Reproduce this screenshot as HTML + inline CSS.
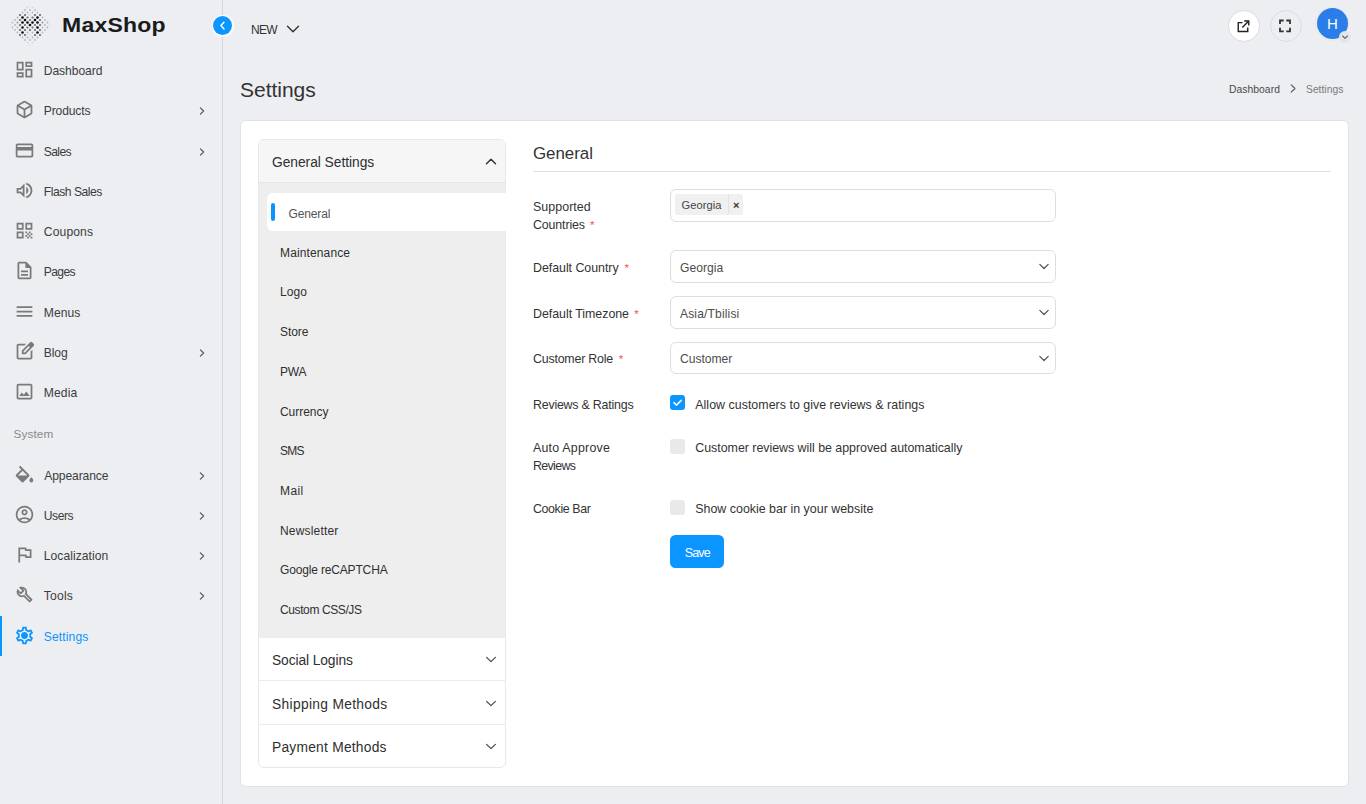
<!DOCTYPE html>
<html lang="en">
<head>
<meta charset="utf-8">
<title>Settings - MaxShop</title>
<style>
*{box-sizing:border-box;margin:0;padding:0}
html,body{width:1366px;height:804px;overflow:hidden}
body{background:#eceef2;font-family:"Liberation Sans",Arial,sans-serif;font-size:12px;color:#3a3a3a;position:relative}
.abs{position:absolute}
svg{display:block}
/* sidebar */
#sidebar{position:absolute;left:0;top:0;width:223px;height:804px;border-right:1px solid #d5d6db}
.logo{position:absolute;left:10px;top:5px}
.brand{position:absolute;left:62px;top:11px;font-weight:bold;font-size:20px;line-height:28px;color:#1b1b1b;transform-origin:0 50%;transform:scaleX(1.15);letter-spacing:0.2px;white-space:nowrap}
.nav{position:absolute;left:0;width:222px;height:40px}
.nav svg.ic{position:absolute;left:13.500px;top:8.300px}
.nav .t{position:absolute;left:43.800px;top:0;line-height:40px;font-size:12.100px;color:#3c3c3c;white-space:nowrap}
.nav svg.ar{position:absolute;left:198px;top:15.200px}
.nav.active .t{color:#0b95ff}
.nav.active:before{content:"";position:absolute;left:0;top:-1.200px;width:2px;height:40px;background:#0b95ff}
.sect{position:absolute;left:13.500px;font-size:11.800px;color:#8a8a8a;line-height:20px}
/* header */
#collapse{position:absolute;left:211.500px;top:14.600px;width:22px;height:22px;border-radius:50%;background:#fdfdfe}
#collapse svg{position:absolute;left:1.200px;top:1.200px;border-radius:50%;background:#0b95ff}
.hbtn{position:absolute;width:32px;height:32px;border-radius:50%;border:1px solid #dcdde0}
h1{position:absolute;left:240px;top:75.300px;font-weight:normal;font-size:21px;line-height:30px;color:#333}
.crumb{position:absolute;top:82.800px;font-size:10.3px;line-height:14px;white-space:nowrap}
/* card */
#card{position:absolute;left:240px;top:120px;width:1108.600px;height:666.500px;background:#fff;border:1px solid #e0e2e6;border-radius:6px}
#acc{position:absolute;left:258px;top:139px;width:248px;height:629px;border:1px solid #e8e8e8;border-radius:6px;background:#fff}
.acch{position:absolute;left:0;width:246px;font-size:13.8px;color:#2f2f2f;padding-left:13px;white-space:nowrap}
.acch svg{position:absolute;left:226.400px}
.sub{position:absolute;left:21px;font-size:12px;line-height:20px;color:#2f2f2f;white-space:nowrap}
/* form */
.lbl{position:absolute;left:533px;font-size:12.400px;line-height:18px;color:#333;white-space:nowrap}
.lbl i{font-style:normal;color:#f4524a;margin-left:1.500px;font-size:11.500px}
.fld{position:absolute;left:670.300px;width:385.600px;height:32.400px;border:1px solid #dedede;border-radius:6px;background:#fff}
.fld .v{position:absolute;left:8.700px;top:1.400px;line-height:30.400px;font-size:12.100px;color:#4d4d4d;white-space:nowrap}
.fld svg{position:absolute;left:366.500px;top:11px}
.cb{position:absolute;left:670px;width:15px;height:15px;border-radius:3px;background:#e9e9e9}
.cb.on{background:#0b95ff}
.cbt{position:absolute;left:695.300px;font-size:12.400px;line-height:18px;color:#333;white-space:nowrap}
#t_n0{letter-spacing:-0.075px;margin-left:0.00px}
#t_n1{letter-spacing:-0.157px;margin-left:0.00px}
#t_n2{letter-spacing:-0.625px;margin-left:0.00px}
#t_n3{letter-spacing:-0.470px;margin-left:0.00px}
#t_n4{letter-spacing:0.133px;margin-left:0.00px}
#t_n5{letter-spacing:-0.625px;margin-left:0.00px}
#t_n6{letter-spacing:0.050px;margin-left:0.00px}
#t_n7{letter-spacing:-0.133px;margin-left:0.00px}
#t_n8{letter-spacing:0.125px;margin-left:0.00px}
#t_n9{letter-spacing:-0.100px;margin-left:0.40px}
#t_n10{letter-spacing:-0.450px;margin-left:0.00px}
#t_n11{letter-spacing:0.055px;margin-left:0.00px}
#t_n12{letter-spacing:0.200px;margin-left:0.00px}
#t_n13{letter-spacing:0.114px;margin-left:0.00px}
#t_sys{letter-spacing:0.100px;margin-left:0.00px}
#t_new{letter-spacing:-0.750px;margin-left:0.00px}
#t_h1{letter-spacing:-0.014px;margin-left:0.00px}
#t_bc1{letter-spacing:0.062px;margin-left:0.00px}
#t_bc2{letter-spacing:0.014px;margin-left:0.00px}
#t_a0{letter-spacing:-0.040px;margin-left:0.00px}
#t_a1{letter-spacing:-0.100px;margin-left:0.00px}
#t_a2{letter-spacing:0.320px;margin-left:0.00px}
#t_a3{letter-spacing:0.236px;margin-left:0.00px}
#t_sg{letter-spacing:-0.133px;margin-left:0.00px}
#t_s0{letter-spacing:0.130px;margin-left:0.00px}
#t_s1{letter-spacing:0.067px;margin-left:0.00px}
#t_s2{letter-spacing:-0.050px;margin-left:0.00px}
#t_s3{letter-spacing:-0.200px;margin-left:0.00px}
#t_s4{letter-spacing:-0.043px;margin-left:0.00px}
#t_s5{letter-spacing:-0.800px;margin-left:0.00px}
#t_s6{letter-spacing:0.400px;margin-left:0.00px}
#t_s7{letter-spacing:0.178px;margin-left:0.00px}
#t_s8{letter-spacing:-0.160px;margin-left:0.00px}
#t_s9{letter-spacing:-0.392px;margin-left:0.00px}
#t_title{letter-spacing:-0.017px;margin-left:0.00px}
#t_l1a{letter-spacing:0.062px;margin-left:0.00px}
#t_l1b{letter-spacing:-0.125px;margin-left:0.00px}
#t_l2{letter-spacing:-0.036px;margin-left:0.00px}
#t_l3{letter-spacing:-0.027px;margin-left:0.00px}
#t_l4{letter-spacing:-0.200px;margin-left:0.00px}
#t_l5{letter-spacing:-0.212px;margin-left:0.00px}
#t_l6a{letter-spacing:0.218px;margin-left:0.00px}
#t_l6b{letter-spacing:-0.650px;margin-left:0.00px}
#t_l7{letter-spacing:-0.378px;margin-left:0.00px}
#t_x1{letter-spacing:0.000px;margin-left:1.60px}
#t_x2{letter-spacing:0.000px;margin-left:2.60px}
#t_x3{letter-spacing:0.000px;margin-left:1.80px}
#t_x4{letter-spacing:0.000px;margin-left:2.30px}
#t_v2{letter-spacing:0.033px;margin-left:0.00px}
#t_v3{letter-spacing:0.136px;margin-left:0.00px}
#t_v4{letter-spacing:-0.014px;margin-left:0.00px}
#t_tag{letter-spacing:0.067px;margin-left:0.00px}
#t_c5{letter-spacing:0.030px;margin-left:0.00px}
#t_c6{letter-spacing:-0.017px;margin-left:0.00px}
#t_c7{letter-spacing:0.010px;margin-left:0.00px}
#t_save{letter-spacing:-0.850px;margin-left:0.00px}
</style>
</head>
<body>
<div id="sidebar">
<svg class="logo" width="40" height="40" viewBox="0 0 40 40"><circle cx="20.00" cy="0.00" r="0.80" fill="#0c0c0c" fill-opacity="0.07"/><circle cx="22.50" cy="2.50" r="0.85" fill="#0c0c0c" fill-opacity="0.13"/><circle cx="17.50" cy="2.50" r="0.85" fill="#0c0c0c" fill-opacity="0.13"/><circle cx="20.00" cy="5.00" r="0.90" fill="#0c0c0c" fill-opacity="0.24"/><circle cx="25.00" cy="5.00" r="0.90" fill="#0c0c0c" fill-opacity="0.24"/><circle cx="15.00" cy="5.00" r="0.90" fill="#0c0c0c" fill-opacity="0.24"/><circle cx="22.50" cy="7.50" r="0.90" fill="#0c0c0c" fill-opacity="0.24"/><circle cx="17.50" cy="7.50" r="0.90" fill="#0c0c0c" fill-opacity="0.24"/><circle cx="27.50" cy="7.50" r="0.90" fill="#0c0c0c" fill-opacity="0.24"/><circle cx="12.50" cy="7.50" r="0.90" fill="#0c0c0c" fill-opacity="0.24"/><circle cx="20.00" cy="10.00" r="0.85" fill="#0c0c0c" fill-opacity="0.13"/><circle cx="25.00" cy="10.00" r="1.10" fill="#0c0c0c" fill-opacity="0.58"/><circle cx="15.00" cy="10.00" r="1.10" fill="#0c0c0c" fill-opacity="0.58"/><circle cx="30.00" cy="10.00" r="1.10" fill="#0c0c0c" fill-opacity="0.58"/><circle cx="10.00" cy="10.00" r="1.10" fill="#0c0c0c" fill-opacity="0.58"/><circle cx="22.50" cy="12.50" r="1.10" fill="#0c0c0c" fill-opacity="0.58"/><circle cx="17.50" cy="12.50" r="1.10" fill="#0c0c0c" fill-opacity="0.58"/><circle cx="27.50" cy="12.50" r="1.30" fill="#0c0c0c" fill-opacity="1.00"/><circle cx="12.50" cy="12.50" r="1.30" fill="#0c0c0c" fill-opacity="1.00"/><circle cx="7.50" cy="12.50" r="0.90" fill="#0c0c0c" fill-opacity="0.24"/><circle cx="32.50" cy="12.50" r="0.90" fill="#0c0c0c" fill-opacity="0.24"/><circle cx="20.00" cy="15.00" r="1.10" fill="#0c0c0c" fill-opacity="0.58"/><circle cx="25.00" cy="15.00" r="1.30" fill="#0c0c0c" fill-opacity="1.00"/><circle cx="15.00" cy="15.00" r="1.30" fill="#0c0c0c" fill-opacity="1.00"/><circle cx="30.00" cy="15.00" r="1.10" fill="#0c0c0c" fill-opacity="0.58"/><circle cx="10.00" cy="15.00" r="1.10" fill="#0c0c0c" fill-opacity="0.58"/><circle cx="5.00" cy="15.00" r="0.90" fill="#0c0c0c" fill-opacity="0.24"/><circle cx="35.00" cy="15.00" r="0.90" fill="#0c0c0c" fill-opacity="0.24"/><circle cx="22.50" cy="17.50" r="1.30" fill="#0c0c0c" fill-opacity="1.00"/><circle cx="17.50" cy="17.50" r="1.30" fill="#0c0c0c" fill-opacity="1.00"/><circle cx="27.50" cy="17.50" r="1.30" fill="#0c0c0c" fill-opacity="1.00"/><circle cx="12.50" cy="17.50" r="1.30" fill="#0c0c0c" fill-opacity="1.00"/><circle cx="7.50" cy="17.50" r="1.00" fill="#0c0c0c" fill-opacity="0.36"/><circle cx="32.50" cy="17.50" r="1.00" fill="#0c0c0c" fill-opacity="0.36"/><circle cx="2.50" cy="17.50" r="0.90" fill="#0c0c0c" fill-opacity="0.24"/><circle cx="37.50" cy="17.50" r="0.90" fill="#0c0c0c" fill-opacity="0.24"/><circle cx="20.00" cy="20.00" r="1.30" fill="#0c0c0c" fill-opacity="1.00"/><circle cx="25.00" cy="20.00" r="1.10" fill="#0c0c0c" fill-opacity="0.58"/><circle cx="15.00" cy="20.00" r="1.10" fill="#0c0c0c" fill-opacity="0.58"/><circle cx="30.00" cy="20.00" r="1.10" fill="#0c0c0c" fill-opacity="0.58"/><circle cx="10.00" cy="20.00" r="1.10" fill="#0c0c0c" fill-opacity="0.58"/><circle cx="5.00" cy="20.00" r="0.90" fill="#0c0c0c" fill-opacity="0.24"/><circle cx="35.00" cy="20.00" r="0.90" fill="#0c0c0c" fill-opacity="0.24"/><circle cx="40.00" cy="20.00" r="0.85" fill="#0c0c0c" fill-opacity="0.13"/><circle cx="0.00" cy="20.00" r="0.85" fill="#0c0c0c" fill-opacity="0.13"/><circle cx="22.50" cy="22.50" r="1.10" fill="#0c0c0c" fill-opacity="0.58"/><circle cx="17.50" cy="22.50" r="1.10" fill="#0c0c0c" fill-opacity="0.58"/><circle cx="27.50" cy="22.50" r="1.30" fill="#0c0c0c" fill-opacity="1.00"/><circle cx="12.50" cy="22.50" r="1.30" fill="#0c0c0c" fill-opacity="1.00"/><circle cx="7.50" cy="22.50" r="0.90" fill="#0c0c0c" fill-opacity="0.24"/><circle cx="32.50" cy="22.50" r="0.90" fill="#0c0c0c" fill-opacity="0.24"/><circle cx="2.50" cy="22.50" r="0.90" fill="#0c0c0c" fill-opacity="0.24"/><circle cx="37.50" cy="22.50" r="0.90" fill="#0c0c0c" fill-opacity="0.24"/><circle cx="20.00" cy="25.00" r="1.10" fill="#0c0c0c" fill-opacity="0.58"/><circle cx="25.00" cy="25.00" r="1.10" fill="#0c0c0c" fill-opacity="0.58"/><circle cx="15.00" cy="25.00" r="1.10" fill="#0c0c0c" fill-opacity="0.58"/><circle cx="30.00" cy="25.00" r="1.10" fill="#0c0c0c" fill-opacity="0.58"/><circle cx="10.00" cy="25.00" r="1.10" fill="#0c0c0c" fill-opacity="0.58"/><circle cx="5.00" cy="25.00" r="0.90" fill="#0c0c0c" fill-opacity="0.24"/><circle cx="35.00" cy="25.00" r="0.90" fill="#0c0c0c" fill-opacity="0.24"/><circle cx="22.50" cy="27.50" r="0.90" fill="#0c0c0c" fill-opacity="0.24"/><circle cx="17.50" cy="27.50" r="0.90" fill="#0c0c0c" fill-opacity="0.24"/><circle cx="27.50" cy="27.50" r="1.30" fill="#0c0c0c" fill-opacity="1.00"/><circle cx="12.50" cy="27.50" r="1.30" fill="#0c0c0c" fill-opacity="1.00"/><circle cx="7.50" cy="27.50" r="0.90" fill="#0c0c0c" fill-opacity="0.24"/><circle cx="32.50" cy="27.50" r="0.90" fill="#0c0c0c" fill-opacity="0.24"/><circle cx="20.00" cy="30.00" r="0.85" fill="#0c0c0c" fill-opacity="0.13"/><circle cx="25.00" cy="30.00" r="1.10" fill="#0c0c0c" fill-opacity="0.58"/><circle cx="15.00" cy="30.00" r="1.10" fill="#0c0c0c" fill-opacity="0.58"/><circle cx="30.00" cy="30.00" r="1.10" fill="#0c0c0c" fill-opacity="0.58"/><circle cx="10.00" cy="30.00" r="1.10" fill="#0c0c0c" fill-opacity="0.58"/><circle cx="22.50" cy="32.50" r="0.90" fill="#0c0c0c" fill-opacity="0.24"/><circle cx="17.50" cy="32.50" r="0.90" fill="#0c0c0c" fill-opacity="0.24"/><circle cx="27.50" cy="32.50" r="0.90" fill="#0c0c0c" fill-opacity="0.24"/><circle cx="12.50" cy="32.50" r="0.90" fill="#0c0c0c" fill-opacity="0.24"/><circle cx="20.00" cy="35.00" r="0.90" fill="#0c0c0c" fill-opacity="0.24"/><circle cx="25.00" cy="35.00" r="0.90" fill="#0c0c0c" fill-opacity="0.24"/><circle cx="15.00" cy="35.00" r="0.90" fill="#0c0c0c" fill-opacity="0.24"/><circle cx="22.50" cy="37.50" r="0.85" fill="#0c0c0c" fill-opacity="0.13"/><circle cx="17.50" cy="37.50" r="0.85" fill="#0c0c0c" fill-opacity="0.13"/><circle cx="20.00" cy="40.00" r="0.80" fill="#0c0c0c" fill-opacity="0.07"/></svg>
<div class="brand">MaxShop</div>
<div class="nav" style="top:51px"><svg class="ic" width="21" height="21" viewBox="0 0 24 24"><path d="M19 5v2h-4V5h4M9 5v6H5V5h4m10 8v6h-4v-6h4M9 17v2H5v-2h4M21 3h-8v6h8V3zM11 3H3v10h8V3zm10 8h-8v10h8V11zm-10 4H3v6h8v-6z" fill="#7a7a7a"/></svg><div class="t"><span id="t_n0">Dashboard</span></div></div>
<div class="nav" style="top:91px"><svg class="ic" width="21" height="21" viewBox="0 -960 960 960"><path d="M440-183v-274L200-596v274l240 139Zm80 0 240-139v-274L520-457v274Zm-40-343 237-137-237-137-237 137 237 137ZM160-252q-19-11-29.500-29T120-321v-318q0-22 10.500-40t29.500-29l280-161q19-11 40-11t40 11l280 161q19 11 29.500 29t10.500 40v318q0 22-10.500 40T800-252L520-91q-19 11-40 11t-40-11L160-252Zm320-228Z" fill="#7a7a7a"/></svg><div class="t"><span id="t_n1">Products</span></div><svg class="ar" width="8" height="10" viewBox="0 0 8 10"><path d="M2.400 1.900 L5.600 5 L2.400 8.100" fill="none" stroke="#5a5a5a" stroke-width="1.250" stroke-linecap="round" stroke-linejoin="round"/></svg></div>
<div class="nav" style="top:132px"><svg class="ic" width="21" height="21" viewBox="0 0 24 24"><path d="M20 4H4c-1.11 0-1.99.89-1.99 2L2 18c0 1.11.89 2 2 2h16c1.11 0 2-.89 2-2V6c0-1.11-.89-2-2-2zm0 14H4v-6h16v6zm0-10H4V6h16v2z" fill="#7a7a7a"/></svg><div class="t"><span id="t_n2">Sales</span></div><svg class="ar" width="8" height="10" viewBox="0 0 8 10"><path d="M2.400 1.900 L5.600 5 L2.400 8.100" fill="none" stroke="#5a5a5a" stroke-width="1.250" stroke-linecap="round" stroke-linejoin="round"/></svg></div>
<div class="nav" style="top:172px"><svg class="ic" width="21" height="21" viewBox="0 0 24 24"><path d="M3 9v6h4l5 5V4L7 9H3zm7-.17v6.34L7.83 13H5v-2h2.83L10 8.83zM16.5 12c0-1.77-1.02-3.29-2.5-4.03v8.05c1.48-.73 2.5-2.25 2.5-4.02zM14 3.23v2.06c2.89.86 5 3.54 5 6.71s-2.11 5.85-5 6.71v2.06c4.01-.91 7-4.49 7-8.77 0-4.28-2.99-7.86-7-8.770z" fill="#7a7a7a"/></svg><div class="t"><span id="t_n3">Flash Sales</span></div></div>
<div class="nav" style="top:212px"><svg class="ic" width="21" height="21" viewBox="0 0 24 24"><path d="M3 11h8V3H3v8zm2-6h4v4H5V5zM3 21h8v-8H3v8zm2-6h4v4H5v-4zM13 3v8h8V3h-8zm6 6h-4V5h4v4zM19 19h2v2h-2zM13 13h2v2h-2zM15 15h2v2h-2zM13 17h2v2h-2zM15 19h2v2h-2zM17 17h2v2h-2zM17 13h2v2h-2zM19 15h2v2h-2z" fill="#7a7a7a"/></svg><div class="t"><span id="t_n4">Coupons</span></div></div>
<div class="nav" style="top:252px"><svg class="ic" width="21" height="21" viewBox="0 0 24 24"><path d="M8 16h8v2H8zm0-4h8v2H8zm6-10H6c-1.1 0-2 .9-2 2v16c0 1.1.89 2 1.99 2H18c1.1 0 2-.9 2-2V8l-6-6zm4 18H6V4h7v5h5v11z" fill="#7a7a7a"/></svg><div class="t"><span id="t_n5">Pages</span></div></div>
<div class="nav" style="top:293px"><svg class="ic" width="21" height="21" viewBox="0 0 24 24"><path d="M3 18h18v-2H3v2zm0-5h18v-2H3v2zm0-7v2h18V6H3z" fill="#7a7a7a"/></svg><div class="t"><span id="t_n6">Menus</span></div></div>
<div class="nav" style="top:333px"><svg class="ic" width="21" height="21" viewBox="0 -960 960 960"><path d="M200-120q-33 0-56.500-23.500T120-200v-560q0-33 23.500-56.500T200-840h357l-80 80H200v560h560v-278l80-80v358q0 33-23.500 56.500T760-120H200Zm280-360ZM360-360v-170l367-367q12-12 27-18t30-6q16 0 30.500 6t26.500 18l56 57q11 12 17 26.500t6 29.500q0 15-5.500 29.500T897-728L530-360H360Zm481-424-56-56 56 56ZM440-440h56l232-232-28-28-29-28-231 231v57Zm260-260-29-28 29 28 28 28-28-28Z" fill="#7a7a7a"/></svg><div class="t"><span id="t_n7">Blog</span></div><svg class="ar" width="8" height="10" viewBox="0 0 8 10"><path d="M2.400 1.900 L5.600 5 L2.400 8.100" fill="none" stroke="#5a5a5a" stroke-width="1.250" stroke-linecap="round" stroke-linejoin="round"/></svg></div>
<div class="nav" style="top:373px"><svg class="ic" width="21" height="21" viewBox="0 0 24 24"><path d="M19 5v14H5V5h14m0-2H5c-1.1 0-2 .9-2 2v14c0 1.1.9 2 2 2h14c1.1 0 2-.9 2-2V5c0-1.1-.9-2-2-2zm-4.860 8.860l-3 3.870L9 13.140 6 17h12l-3.860-5.140z" fill="#7a7a7a"/></svg><div class="t"><span id="t_n8">Media</span></div></div>
<div class="nav" style="top:456px"><svg class="ic" width="21" height="21" viewBox="0 -960 960 960"><path d="M346-140 100-386q-10-10-15-22t-5-25q0-13 5-25t15-22l230-229-106-106 62-65 400 400q10 10 14.500 22t4.500 25q0 13-4.500 25T686-386L440-140q-10 10-22 15t-25 5q-13 0-25-5t-22-15Zm47-506L179-432h428L393-646Zm399 526q-36 0-61-25.500T706-208q0-27 13.500-51t30.500-47l42-54 44 54q16 23 30 47t14 51q0 37-26 62.500T792-120Z" fill="#7a7a7a"/></svg><div class="t"><span id="t_n9">Appearance</span></div><svg class="ar" width="8" height="10" viewBox="0 0 8 10"><path d="M2.400 1.900 L5.600 5 L2.400 8.100" fill="none" stroke="#5a5a5a" stroke-width="1.250" stroke-linecap="round" stroke-linejoin="round"/></svg></div>
<div class="nav" style="top:496px"><svg class="ic" width="21" height="21" viewBox="0 0 24 24"><path d="M12 2C6.480 2 2 6.480 2 12s4.480 10 10 10 10-4.480 10-10S17.520 2 12 2zM7.350 18.500C8.660 17.560 10.260 17 12 17s3.340.56 4.650 1.500C15.340 19.440 13.740 20 12 20s-3.340-.56-4.650-1.500zm10.790-1.380C16.450 15.800 14.320 15 12 15s-4.450.8-6.140 2.120C4.700 15.730 4 13.950 4 12c0-4.420 3.580-8 8-8s8 3.580 8 8c0 1.950-.7 3.730-1.860 5.120zM12 6c-1.930 0-3.500 1.570-3.500 3.500S10.070 13 12 13s3.500-1.570 3.500-3.500S13.930 6 12 6zm0 5c-.83 0-1.500-.67-1.500-1.500S11.170 8 12 8s1.500.67 1.500 1.500S12.830 11 12 11z" fill="#7a7a7a"/></svg><div class="t"><span id="t_n10">Users</span></div><svg class="ar" width="8" height="10" viewBox="0 0 8 10"><path d="M2.400 1.900 L5.600 5 L2.400 8.100" fill="none" stroke="#5a5a5a" stroke-width="1.250" stroke-linecap="round" stroke-linejoin="round"/></svg></div>
<div class="nav" style="top:536px"><svg class="ic" width="21" height="21" viewBox="0 0 24 24"><path d="M12.360 6l.4 2H18v6h-3.360l-.4-2H7V6h5.360M14 4H5v17h2v-7h5.600l.4 2h7V6h-5.600L14 4z" fill="#7a7a7a"/></svg><div class="t"><span id="t_n11">Localization</span></div><svg class="ar" width="8" height="10" viewBox="0 0 8 10"><path d="M2.400 1.900 L5.600 5 L2.400 8.100" fill="none" stroke="#5a5a5a" stroke-width="1.250" stroke-linecap="round" stroke-linejoin="round"/></svg></div>
<div class="nav" style="top:576px"><svg class="ic" width="21" height="21" viewBox="0 -960 960 960"><path d="M686-132 444-376q-20 8-40.500 12t-43.500 4q-100 0-170-70t-70-170q0-36 10-68.500t28-61.500l146 146 72-72-146-146q29-18 61.500-28t68.500-10q100 0 170 70t70 170q0 23-4 43.500T584-516l244 242q12 12 12 29t-12 29l-84 84q-12 12-29 12t-29-12Zm29-85 27-27-256-256q18-20 26-46.500t8-53.500q0-60-38.500-104.500T386-758l74 74q12 12 12 28t-12 28L332-500q-12 12-28 12t-28-12l-74-74q9 57 53.500 95.500T360-440q26 0 52-8t47-25l256 256ZM472-488Z" fill="#7a7a7a"/></svg><div class="t"><span id="t_n12">Tools</span></div><svg class="ar" width="8" height="10" viewBox="0 0 8 10"><path d="M2.400 1.900 L5.600 5 L2.400 8.100" fill="none" stroke="#5a5a5a" stroke-width="1.250" stroke-linecap="round" stroke-linejoin="round"/></svg></div>
<div class="nav active" style="top:617px"><svg class="ic" width="21" height="21" viewBox="0 0 24 24"><path d="M19.430 12.980c.04-.32.07-.64.07-.98 0-.34-.03-.66-.07-.98l2.110-1.650c.19-.15.24-.42.12-.64l-2-3.460c-.09-.16-.26-.25-.44-.25-.06 0-.12.01-.17.03l-2.490 1c-.52-.4-1.080-.73-1.690-.98l-.38-2.650C14.460 2.180 14.250 2 14 2h-4c-.25 0-.46.18-.49.42l-.38 2.650c-.61.25-1.170.59-1.690.98l-2.490-1c-.06-.02-.12-.03-.18-.03-.17 0-.34.09-.43.25l-2 3.460c-.13.22-.07.49.12.64l2.110 1.650c-.04.32-.07.65-.07.98 0 .33.03.66.07.98l-2.110 1.650c-.19.15-.24.42-.12.64l2 3.460c.9.16.26.25.44.25.06 0 .12-.1.17-.03l2.490-1c.52.4 1.080.73 1.690.98l.38 2.650c.3.24.24.42.49.42h4c.25 0 .46-.18.49-.42l.38-2.650c.61-.25 1.170-.59 1.690-.98l2.490 1c.6.02.12.03.18.03.17 0 .34-.9.43-.25l2-3.460c.12-.22.07-.49-.12-.64l-2.110-1.650zm-1.980-1.710c.04.31.05.52.05.73 0 .21-.02.43-.05.73l-.14 1.130.89.7 1.080.84-.7 1.210-1.270-.51-1.040-.42-.9.68c-.43.32-.84.56-1.250.73l-1.060.43-.16 1.130-.2 1.350h-1.400l-.19-1.350-.16-1.130-1.060-.43c-.43-.18-.83-.41-1.230-.71l-.91-.7-1.060.43-1.270.51-.7-1.210 1.080-.84.89-.7-.14-1.130c-.03-.31-.05-.54-.05-.74s.02-.43.05-.73l.14-1.130-.89-.7-1.080-.84.7-1.210 1.270.51 1.040.42.9-.68c.43-.32.84-.56 1.250-.73l1.060-.43.16-1.130.2-1.350h1.390l.19 1.350.16 1.130 1.060.43c.43.18.83.41 1.230.71l.91.7 1.060-.43 1.270-.51.7 1.210-1.070.85-.89.7.14 1.130zM12 8c-2.210 0-4 1.790-4 4s1.790 4 4 4 4-1.790 4-4-1.790-4-4-4z" fill="#0b95ff"/></svg><div class="t"><span id="t_n13">Settings</span></div></div>
<div class="sect" style="top:424px"><span id="t_sys">System</span></div>
</div>

<div id="collapse"><svg width="19.600" height="19.600" viewBox="0 0 19.600 19.600"><path d="M11 6.300 L7.900 9.600 L11 12.900" fill="none" stroke="#fff" stroke-width="1.4" stroke-linecap="round" stroke-linejoin="round"/></svg></div>
<div class="abs" style="left:251px;top:23px;font-size:12px;line-height:14px;color:#333"><span id="t_new">NEW</span></div>
<svg class="abs" style="left:286px;top:23.500px" width="14" height="10" viewBox="0 0 14 10"><path d="M1.5 2.2 L7 7.8 L12.5 2.2" fill="none" stroke="#333" stroke-width="1.4" stroke-linecap="round" stroke-linejoin="round"/></svg>

<div class="hbtn" style="left:1227.500px;top:9.500px;background:#fff"><svg style="margin-left:-0.600px" width="30" height="30" viewBox="0 0 30 30" fill="none" stroke="#222" stroke-width="1.400" stroke-linecap="butt" stroke-linejoin="miter"><path d="M14.500 11.650 H10.250 V20.550 H19.750 V16.500"/><path d="M14.300 16.500 L20.500 10.300"/><path d="M16.200 10.050 H20.750 V14.600"/></svg></div>
<div class="hbtn" style="left:1269.500px;top:9.500px;background:#eceef2"><svg style="margin-left:-0.700px" width="30" height="30" viewBox="0 0 30 30" fill="none" stroke="#333" stroke-width="1.800"><path d="M10 13.100 V9.500 H13.700"/><path d="M16.300 9.500 H20 V13.100"/><path d="M20 16.700 V20.300 H16.300"/><path d="M13.700 20.300 H10 V16.700"/></svg></div>
<div class="abs" style="left:1315.400px;top:6.600px;width:34px;height:34px;border-radius:50%;border:1px solid #f0e7de"></div>
<div class="abs" style="left:1316.900px;top:8.100px;width:31px;height:31px;border-radius:50%;background:#2b7de9;color:#fff;font-size:15px;line-height:31px;text-align:center">H</div>
<div class="abs" style="left:1339px;top:31px;width:12px;height:12px;border-radius:50%;background:#e3e5e9"><svg width="12" height="12" viewBox="0 0 12 12"><path d="M3.6 5 L6 7.4 L8.4 5" fill="none" stroke="#666" stroke-width="1.1" stroke-linecap="round" stroke-linejoin="round"/></svg></div>

<h1><span id="t_h1">Settings</span></h1>
<div class="crumb" style="left:1229px;color:#4a4a4a"><span id="t_bc1">Dashboard</span></div>
<svg class="abs" style="left:1289px;top:83.300px" width="8" height="11" viewBox="0 0 8 11"><path d="M2.2 1.8 L6 5.5 L2.2 9.2" fill="none" stroke="#555" stroke-width="1.1" stroke-linecap="round" stroke-linejoin="round"/></svg>
<div class="crumb" style="left:1306px;color:#7a7a7a"><span id="t_bc2">Settings</span></div>

<div id="card"></div>
<div id="acc">
  <div class="abs" style="left:0;top:0;width:246px;height:43px;background:#f6f6f6;border-bottom:1px solid #e6e6e6;border-radius:5px 5px 0 0"></div>
  <div class="acch" style="top:1px;line-height:44px"><span id="t_a0">General Settings</span><svg style="top:15.500px" width="12" height="9" viewBox="0 0 12 9"><path d="M1.5 6.8 L6 2.2 L10.5 6.8" fill="none" stroke="#333" stroke-width="1.4" stroke-linecap="round" stroke-linejoin="round"/></svg></div>
  <div class="abs" style="left:0;top:43px;width:246px;height:454.500px;background:#eeeeee"></div>
  <div class="abs" style="left:7.500px;top:53px;width:241px;height:38.400px;background:#fff;border-radius:6px 0 0 6px"></div>
  <div class="abs" style="left:12px;top:63px;width:4px;height:18px;background:#0b95ff;border-radius:2px"></div>
  <div class="sub" style="left:29.500px;top:63.800px;color:#555"><span id="t_sg">General</span></div>
  <div class="sub" style="top:103px"><span id="t_s0">Maintenance</span></div>
<div class="sub" style="top:142px"><span id="t_s1">Logo</span></div>
<div class="sub" style="top:182px"><span id="t_s2">Store</span></div>
<div class="sub" style="top:222px"><span id="t_s3">PWA</span></div>
<div class="sub" style="top:262px"><span id="t_s4">Currency</span></div>
<div class="sub" style="top:301px"><span id="t_s5">SMS</span></div>
<div class="sub" style="top:341px"><span id="t_s6">Mail</span></div>
<div class="sub" style="top:381px"><span id="t_s7">Newsletter</span></div>
<div class="sub" style="top:420px"><span id="t_s8">Google reCAPTCHA</span></div>
<div class="sub" style="top:460px"><span id="t_s9">Custom CSS/JS</span></div>
  <div class="acch" style="top:499px;line-height:44px"><span id="t_a1">Social Logins</span><svg style="top:15.800px" width="12" height="9" viewBox="0 0 12 9"><path d="M1.600 2.300 L6 6.700 L10.400 2.300" fill="none" stroke="#4a4a4a" stroke-width="1.200" stroke-linecap="round" stroke-linejoin="round"/></svg></div>
  <div class="abs" style="left:0;top:540.300px;width:246px;height:1px;background:#ececec"></div>
  <div class="acch" style="top:543px;line-height:43px"><span id="t_a2">Shipping Methods</span><svg style="top:15.800px" width="12" height="9" viewBox="0 0 12 9"><path d="M1.600 2.300 L6 6.700 L10.400 2.300" fill="none" stroke="#4a4a4a" stroke-width="1.200" stroke-linecap="round" stroke-linejoin="round"/></svg></div>
  <div class="abs" style="left:0;top:584px;width:246px;height:1px;background:#ececec"></div>
  <div class="acch" style="top:586px;line-height:44px"><span id="t_a3">Payment Methods</span><svg style="top:15.800px" width="12" height="9" viewBox="0 0 12 9"><path d="M1.600 2.300 L6 6.700 L10.400 2.300" fill="none" stroke="#4a4a4a" stroke-width="1.200" stroke-linecap="round" stroke-linejoin="round"/></svg></div>
</div>

<div class="abs" style="left:533px;top:141.500px;font-size:16.900px;line-height:24px;color:#333"><span id="t_title">General</span></div>
<div class="abs" style="left:533px;top:171px;width:798px;height:1px;background:#dfe1e6"></div>

<div class="lbl" style="top:197.700px"><span id="t_l1a">Supported</span></div>
<div class="lbl" style="top:215.700px"><span id="t_l1b">Countries</span> <i id="t_x1">*</i></div>
<div class="fld" style="top:189.300px">
  <div class="abs" style="left:3.700px;top:3.500px;width:67.700px;height:21px;background:#f0f0f0;border-radius:3px"></div>
  <div class="abs" style="left:10.200px;top:5px;font-size:11.100px;line-height:20px;color:#444"><span id="t_tag">Georgia</span></div>
  <div class="abs" style="left:57px;top:3.500px;width:1px;height:20.600px;background:#e3e3e3"></div>
  <div class="abs" style="left:61.600px;top:5px;font-size:11px;line-height:20px;color:#333;font-weight:bold">×</div>
</div>
<div class="lbl" style="top:259px"><span id="t_l2">Default Country</span> <i id="t_x2">*</i></div>
<div class="fld" style="top:250.400px"><div class="v"><span id="t_v2">Georgia</span></div><svg width="12" height="9" viewBox="0 0 12 9"><path d="M1.800 2.400 L6 6.500 L10.200 2.400" fill="none" stroke="#505050" stroke-width="1.200" stroke-linecap="round" stroke-linejoin="round"/></svg></div>
<div class="lbl" style="top:305px"><span id="t_l3">Default Timezone</span> <i id="t_x3">*</i></div>
<div class="fld" style="top:296.400px"><div class="v"><span id="t_v3">Asia/Tbilisi</span></div><svg width="12" height="9" viewBox="0 0 12 9"><path d="M1.800 2.400 L6 6.500 L10.200 2.400" fill="none" stroke="#505050" stroke-width="1.200" stroke-linecap="round" stroke-linejoin="round"/></svg></div>
<div class="lbl" style="top:350px"><span id="t_l4">Customer Role</span> <i id="t_x4">*</i></div>
<div class="fld" style="top:341.700px"><div class="v"><span id="t_v4">Customer</span></div><svg width="12" height="9" viewBox="0 0 12 9"><path d="M1.800 2.400 L6 6.500 L10.200 2.400" fill="none" stroke="#505050" stroke-width="1.200" stroke-linecap="round" stroke-linejoin="round"/></svg></div>

<div class="lbl" style="top:395.600px"><span id="t_l5">Reviews &amp; Ratings</span></div>
<div class="cb on" style="top:395px"><svg width="15" height="15" viewBox="0 0 15 15"><path d="M4 7.600 L6.500 10.100 L11.200 5.400" fill="none" stroke="#fff" stroke-width="1.500" stroke-linecap="round" stroke-linejoin="round"/></svg></div>
<div class="cbt" style="top:395.600px"><span id="t_c5">Allow customers to give reviews &amp; ratings</span></div>

<div class="lbl" style="top:439px"><span id="t_l6a">Auto Approve</span></div>
<div class="lbl" style="top:457px"><span id="t_l6b">Reviews</span></div>
<div class="cb" style="top:438.800px"></div>
<div class="cbt" style="top:439px"><span id="t_c6">Customer reviews will be approved automatically</span></div>

<div class="lbl" style="top:500px"><span id="t_l7">Cookie Bar</span></div>
<div class="cb" style="top:500px"></div>
<div class="cbt" style="top:500px"><span id="t_c7">Show cookie bar in your website</span></div>

<div class="abs" style="left:670.200px;top:535.400px;width:54.200px;height:32.200px;border-radius:5.500px;background:#0b95ff;color:#fff;font-size:12.500px;line-height:32px;text-align:center"><span id="t_save" style="position:relative;top:1.500px">Save</span></div>
</body>
</html>
